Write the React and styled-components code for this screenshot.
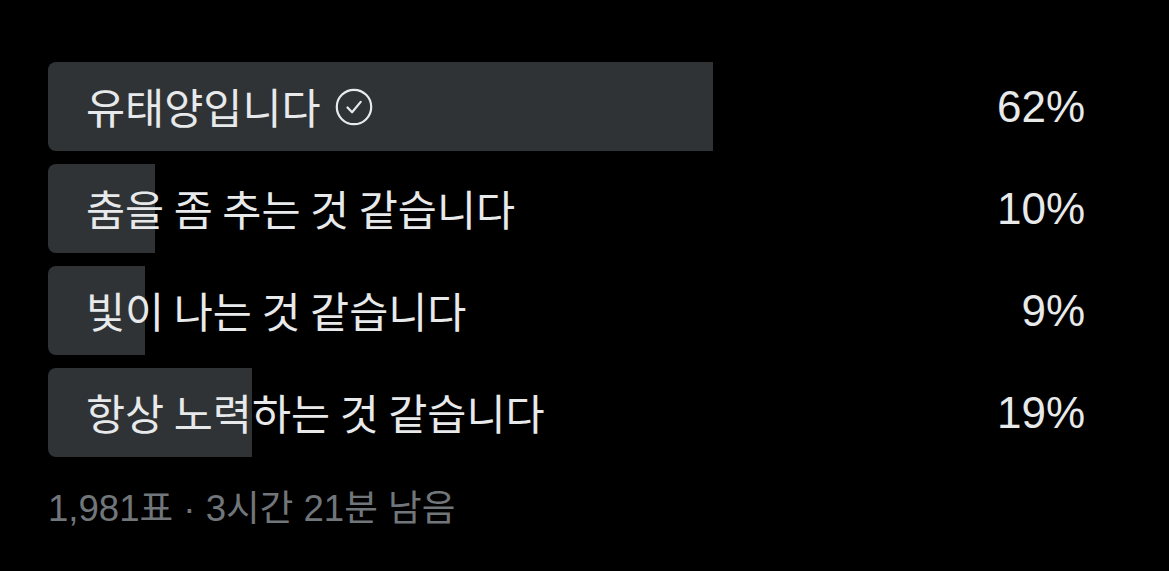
import React from "react";
import styled, { createGlobalStyle } from "styled-components";

const GlobalStyle = createGlobalStyle`
  html, body {
    margin: 0;
    padding: 0;
    background: #000;
  }
  body {
    font-family: "Liberation Sans", "Noto Sans CJK KR", sans-serif;
    color: #e7e9ea;
  }
`;

const options = [
  { label: "유태양입니다", pct: 62, winner: true },
  { label: "춤을 좀 추는 것 같습니다", pct: 10 },
  { label: "빛이 나는 것 같습니다", pct: 9 },
  { label: "항상 노력하는 것 같습니다", pct: 19 },
];

const App = () => {
  return (
    <>
      <GlobalStyle />
      <Poll>
        <Options>
          {options.map((o) => (
            <Option key={o.label}>
              <Bar style={{ width: `${(o.pct / 62) * 665}px` }} />
              <Label>
                {o.label}
                {o.winner && <CheckIcon />}
              </Label>
              <Percent>{o.pct}%</Percent>
            </Option>
          ))}
        </Options>
        <Footer>1,981표 · 3시간 21분 남음</Footer>
      </Poll>
    </>
  );
};

const CheckIcon = () => (
  <Check viewBox="0 0 38 38" width="38" height="38">
    <circle cx="19" cy="19" r="17.2" fill="none" stroke="#e7e9ea" strokeWidth="2.2" />
    <path
      d="M12.5 19.5l4.6 4.8 8.6-10.4"
      fill="none"
      stroke="#e7e9ea"
      strokeWidth="2.2"
      strokeLinecap="round"
      strokeLinejoin="round"
    />
  </Check>
);

const Poll = styled.div`
  width: 1073px;
  padding: 62px 48px 0 48px;
`;

const Options = styled.div`
  display: flex;
  flex-direction: column;
  gap: 13px;
`;

const Option = styled.div`
  position: relative;
  height: 89px;
  display: flex;
  align-items: center;
  justify-content: space-between;
  padding: 0 36px 0 38px;
`;

const Bar = styled.div`
  position: absolute;
  left: 0;
  top: 0;
  bottom: 0;
  background: #2f3336;
  border-radius: 8px 0 0 8px;
`;

const Label = styled.span`
  position: relative;
  display: flex;
  align-items: center;
  gap: 14px;
  font-family: "Noto Sans CJK KR", sans-serif;
  font-size: 42.5px;
  line-height: 1;
  color: #e7e9ea;
`;

const Check = styled.svg`
  display: block;
`;

const Percent = styled.span`
  position: relative;
  font-size: 44px;
  line-height: 1;
  color: #e7e9ea;
`;

const Footer = styled.div`
  margin-top: 34px;
  font-family: "Liberation Sans", "Noto Sans CJK KR", sans-serif;
  font-size: 36.6px;
  line-height: 1;
  color: #71767b;
`;

export default App;
